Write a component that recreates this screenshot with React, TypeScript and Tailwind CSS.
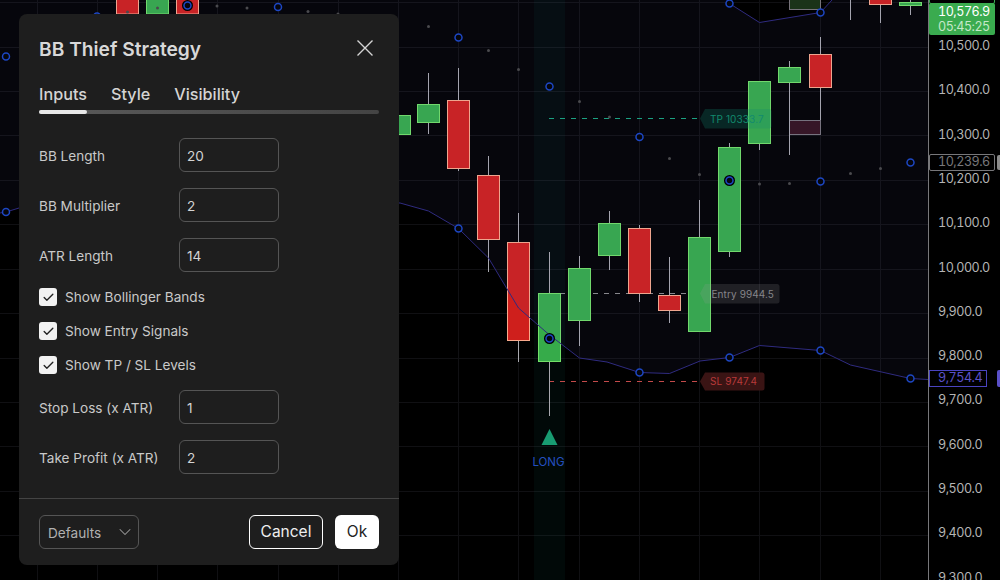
import { Check, ChevronDown } from 'lucide-react';

const FONT = 'Inter, "Liberation Sans", sans-serif';

const axisLabels = [
  '10,500.0', '10,400.0', '10,300.0', '10,200.0', '10,100.0', '10,000.0', '9,900.0',
  '9,800.0', '9,700.0', '9,600.0', '9,500.0', '9,400.0', '9,300.0',
];

const gridX = [37, 97, 157, 217, 278, 338, 398, 458, 518, 579, 639, 699, 759, 820, 880];
const gridY = [2, 47, 91, 135, 180, 224, 269, 313, 358, 402, 446, 491, 535];

// x, body top, body bottom, wick top, wick bottom, up?
const candles: [number, number, number, number, number, boolean][] = [
  [127.5, -5, 14, -5, 14, false],
  [157.5, -5, 14, -5, 14, true],
  [187.5, -5, 14, -5, 14, false],
  [399.5, 115.5, 134.5, 115.5, 134.5, true],
  [428.5, 104.5, 122.5, 73, 134, true],
  [458.5, 100.5, 168.5, 68, 171, false],
  [488.5, 175.5, 239.5, 156, 272, false],
  [518.5, 242.5, 340.5, 213, 362, false],
  [549.5, 293.5, 361.5, 252, 416, true],
  [579.5, 268.5, 320.5, 256, 346, true],
  [609.5, 223.5, 255.5, 211, 270, true],
  [639.5, 228.5, 293.5, 225, 302, false],
  [669.5, 295.5, 310.5, 257, 323, false],
  [699.5, 237.5, 331.5, 200, 332, true],
  [729.5, 147.5, 251.5, 143, 257, true],
  [759.5, 81.5, 143.5, 81, 150, true],
  [789.5, 67.5, 82.5, 61, 155, true],
  [820.5, 54.5, 87.5, 37, 120, false],
  [880.5, -5, 4.5, -5, 23, false],
  [910.5, 2.5, 5.5, -5, 15, true],
];

const dots = [
  [217, 6], [247, 8], [308, 11.5], [338, 14], [127.5, 12], [157.5, 8],
  [428.5, 26.5], [488.5, 50.5], [518.5, 69.5], [579.5, 101.5], [609.5, 117], [669.5, 158.5], [699.5, 174.5],
  [759.5, 184], [789.5, 183.5], [850.5, 173.5], [880.5, 168.5],
];

const circles = [
  [6, 56.5], [6, 212], [97, 16.5], [278, 7], [458.5, 37.5], [549.5, 86.5], [639.5, 137], [458.5, 228.5],
  [729.5, 3.5], [820.5, 12.5], [820.5, 181.5], [910.5, 162.5], [639.5, 372.5], [729.5, 357.5], [820.5, 350.5], [910.5, 378.5],
];
const haloCircles = [[187.5, 5.5], [549.5, 338.5], [729.5, 180.5]];

const lowerBand = '0,213 6,212 19,208 400,203 428.5,211 458.5,228.5 488.5,258 518.5,308 549.5,335 579.5,358 607,362 639.5,372.5 669.5,373.5 700,361 729.5,357.5 759.5,345.5 820.5,350.5 850.5,365 910.5,378.5 928,379.5';
const upperBand = '727,0 729.5,3.5 759.5,22.5 820.5,12.5 832,0';

function Chart() {
  return (
    <svg width="928" height="580" viewBox="0 0 928 580" className="block shrink-0">
      {gridX.map((x) => <line key={x} x1={x + 0.5} x2={x + 0.5} y1="0" y2="580" stroke="#101013" />)}
      {gridY.map((y) => <line key={y} x1="0" x2="928" y1={y + 0.5} y2={y + 0.5} stroke="#101013" />)}
      <rect x="534" y="0" width="31" height="580" fill="#14a08c" opacity="0.055" />

      <line x1="549" x2="702" y1="118.5" y2="118.5" stroke="#17a57e" strokeDasharray="5 6" />
      <line x1="549" x2="702" y1="293.5" y2="293.5" stroke="#8a8a8a" strokeDasharray="5 6" />
      <line x1="549" x2="702" y1="381.5" y2="381.5" stroke="#c44a4a" strokeDasharray="5 6" />

      <rect x="789.5" y="120.5" width="31" height="14" fill="#33111d" stroke="#77737a" />
      <rect x="789.5" y="-5" width="31" height="14.5" fill="#1b3318" stroke="#77737a" />
      <line x1="850.5" x2="850.5" y1="0" y2="20" stroke="#a8a8ae" />

      {candles.map(([x, top, bottom, wickTop, wickBottom, up]) => (
        <g key={x}>
          <line x1={x} x2={x} y1={wickTop} y2={wickBottom} stroke="#a8a8ae" />
          <rect
            x={x - 11}
            y={top}
            width="22"
            height={bottom - top}
            fill={up ? '#36ab4a' : '#cf1f1c'}
            stroke={up ? '#72e068' : '#f7a98c'}
          />
        </g>
      ))}

      <polygon points={`0,0 ${upperBand} 928,0 ${lowerBand.split(' ').reverse().join(' ')}`} fill="#6868d0" opacity="0.06" />
      <polyline points={lowerBand} fill="none" stroke="#2f2b80" />
      <polyline points={upperBand} fill="none" stroke="#2f2b80" />

      {dots.map(([x, y]) => <circle key={`${x}-${y}`} cx={x} cy={y} r="1.5" fill="#4a4a4e" />)}
      {circles.map(([x, y]) => (
        <circle key={`${x}-${y}`} cx={x} cy={y} r="3.5" fill="#06060c" stroke="#1d47c4" strokeWidth="1.5" />
      ))}
      {haloCircles.map(([x, y]) => (
        <g key={x}>
          <circle cx={x} cy={y} r="5.5" fill="#000" />
          <circle cx={x} cy={y} r="3.5" fill="#06060c" stroke="#1d47c4" strokeWidth="1.5" />
        </g>
      ))}

      <polygon points="549.5,429 541.5,445 557.5,445" fill="#189c72" />
      <text x="548.5" y="466" textAnchor="middle" fontSize="11.5" fill="#2450c0" fontFamily={FONT}>LONG</text>

      <path d="M700 118.5 L705 109 H769 Q771.5 109 771.5 111.5 V126 Q771.5 128.5 769 128.5 H705 Z" fill="#0f8a70" fillOpacity="0.25" />
      <text x="710" y="122.5" fontSize="10" letterSpacing="0.1" fill="#128a6e" fontFamily={FONT}>TP 10333.7</text>

      <path d="M700 293.5 L705 284 H777 Q779.5 284 779.5 286.5 V301 Q779.5 303.5 777 303.5 H705 Z" fill="#999" fillOpacity="0.18" />
      <text x="711.5" y="297.5" fontSize="10" letterSpacing="0.1" fill="#85858a" fontFamily={FONT}>Entry 9944.5</text>

      <path d="M700 381.5 L705 372.5 H762 Q764.5 372.5 764.5 375 V388 Q764.5 390.5 762 390.5 H705 Z" fill="#3a1414" />
      <text x="710" y="385" fontSize="10" letterSpacing="0.1" fill="#b83a3a" fontFamily={FONT}>SL 9747.4</text>
    </svg>
  );
}

function PriceAxis() {
  return (
    <div className="relative w-[72px] shrink-0 border-l border-[#77777a] pt-[24px] pl-[9px] text-[12.6px] tracking-[-0.5px] tabular-nums text-[#b4b4b4]">
      {axisLabels.map((label) => (
        <div key={label} className="flex h-[44.33px] items-center leading-none">{label}</div>
      ))}

      <div className="absolute top-[-14px] left-0 h-[18px] w-[66px] rounded-[2px] border border-[#3aab4f]" />
      <div className="absolute top-[3px] left-0 flex h-[32px] w-[66px] flex-col justify-center rounded-[2px] bg-[#3aab4f] pl-[9px] leading-[15px]">
        <span className="text-white">10,576.9</span>
        <span className="text-[#c4e8c8]">05:45:25</span>
      </div>

      <div className="absolute top-[154px] left-0 flex h-[17px] w-[66px] items-center rounded-[2px] border border-[#77777a] bg-black pl-[8px] text-[#77777a]">10,239.6</div>
      <div className="absolute top-[155px] right-0 h-[15px] w-[3px] rounded-l-[2px] bg-[#8a8a8a]" />

      <div className="absolute top-[370px] left-0 flex h-[17px] w-[58px] items-center border border-[#4a44c0] bg-black pl-[8px] text-[#5a50c8]">9,754.4</div>
      <div className="absolute top-[370px] right-0 h-[17px] w-[3px] rounded-l-[2px] bg-[#5a50c8]" />
    </div>
  );
}

function NumberRow({ label, value }: { label: string; value: string }) {
  return (
    <div className="flex h-[34px] items-center">
      <label className="w-[140px] pt-0.5 text-[13.6px] text-[#c9c9c9]">{label}</label>
      <div className="flex h-[34px] w-[100px] items-center rounded-md border border-[#555] pt-0.5 pl-[7px] text-[13.6px] text-[#d4d4d4]">{value}</div>
    </div>
  );
}

function CheckRow({ label }: { label: string }) {
  return (
    <div className="flex h-[18px] items-center gap-2">
      <div className="flex h-[18px] w-[18px] items-center justify-center rounded-[3px] bg-[#f2f2f2]">
        <Check size={13} strokeWidth={2.5} color="#222" />
      </div>
      <span className="text-[13.6px] text-[#c9c9c9]">{label}</span>
    </div>
  );
}

function SettingsDialog() {
  return (
    <div className="absolute top-[14px] left-[19px] w-[380px] rounded-lg bg-[#1e1e1e]">
      <div className="px-5 pt-5">
        <div className="flex h-7 items-center justify-between">
          <h2 className="pt-0.5 text-[19.2px] leading-7 font-semibold text-[#d8d8d8]">BB Thief Strategy</h2>
          <button className="flex h-7 w-7 items-center justify-center">
            <svg width="16" height="16" viewBox="0 0 16 16" fill="none" stroke="#d4d4d4" strokeWidth="1.4">
              <path d="M0.5 0.5 L15.5 15.5 M15.5 0.5 L0.5 15.5" />
            </svg>
          </button>
        </div>

        <div className="mt-5 flex gap-6 text-[16.2px] leading-6 font-medium text-[#d4d4d4]">
          <span>Inputs</span>
          <span>Style</span>
          <span>Visibility</span>
        </div>
        <div className="mt-1 h-1 rounded-full bg-gradient-to-r from-[#5a5a5a] to-[#444]">
          <div className="h-1 w-12 rounded-full bg-[#e8e8e8]" />
        </div>

        <div className="mt-6 flex flex-col gap-4">
          <NumberRow label="BB Length" value="20" />
          <NumberRow label="BB Multiplier" value="2" />
          <NumberRow label="ATR Length" value="14" />
          <CheckRow label="Show Bollinger Bands" />
          <CheckRow label="Show Entry Signals" />
          <CheckRow label="Show TP / SL Levels" />
          <NumberRow label="Stop Loss (x ATR)" value="1" />
          <NumberRow label="Take Profit (x ATR)" value="2" />
        </div>
      </div>

      <div className="mt-6 flex items-center justify-between border-t border-[#444] px-5 pt-4 pb-4">
        <div className="flex h-[34px] w-[100px] items-center justify-between rounded-md border border-[#555] pr-[3px] pl-[8px] text-[13.6px] text-[#b0b0b0]">
          <span className="pt-0.5">Defaults</span>
          <ChevronDown size={20} strokeWidth={1.25} color="#999" />
        </div>
        <div className="flex gap-3">
          <button className="h-[34px] w-[74px] rounded-md border border-white text-[15.5px] text-[#eee]">Cancel</button>
          <button className="h-[34px] w-[44px] rounded-md bg-white text-[15.5px] text-[#222]">Ok</button>
        </div>
      </div>
    </div>
  );
}

export default function App() {
  return (
    <div className="relative flex h-[580px] w-[1000px] overflow-hidden bg-black" style={{ fontFamily: FONT }}>
      <Chart />
      <PriceAxis />
      <SettingsDialog />
    </div>
  );
}
